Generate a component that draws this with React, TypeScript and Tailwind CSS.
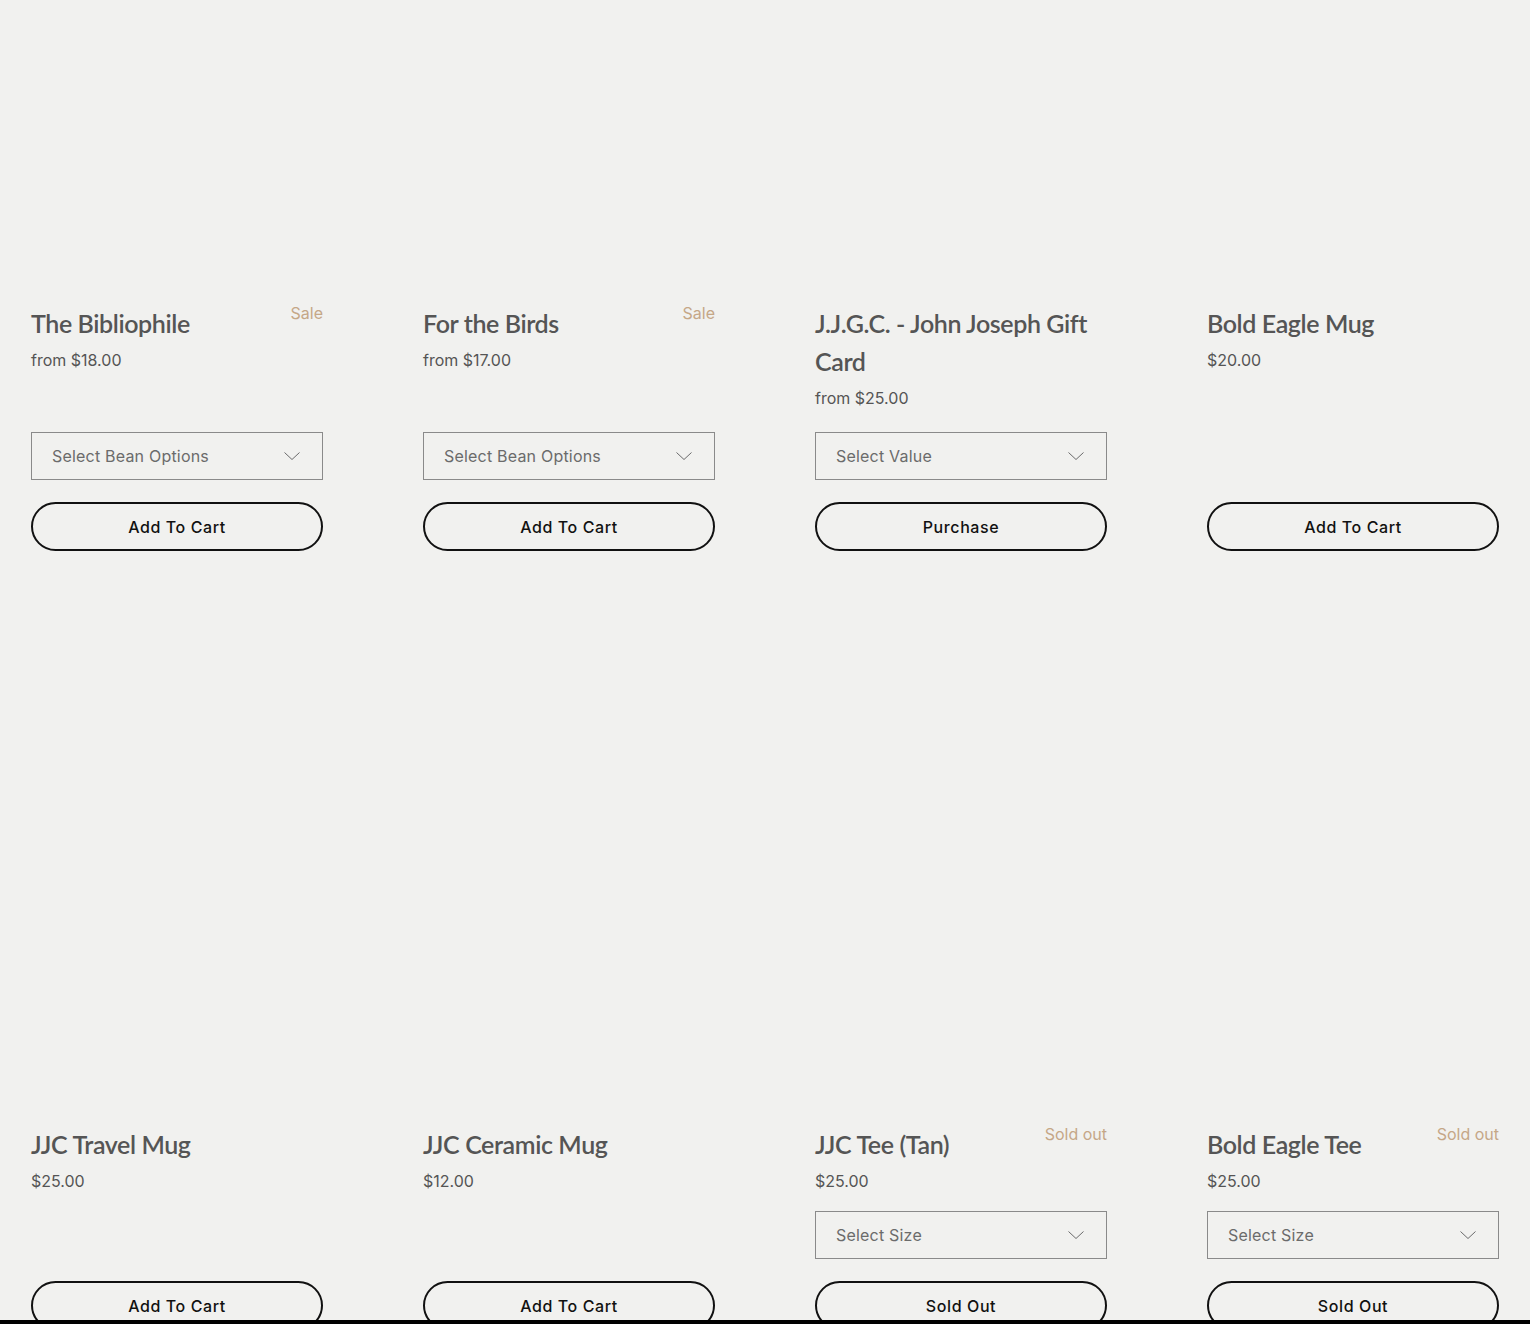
type Producto = {
  nombre: string;
  precio: string;
  etiqueta?: string;
  selector?: string;
  boton: string;
};

const PRODUCTOS: Producto[] = [
  { nombre: "The Bibliophile", precio: "from $18.00", etiqueta: "Sale", selector: "Select Bean Options", boton: "Add To Cart" },
  { nombre: "For the Birds", precio: "from $17.00", etiqueta: "Sale", selector: "Select Bean Options", boton: "Add To Cart" },
  { nombre: "J.J.G.C. - John Joseph Gift Card", precio: "from $25.00", selector: "Select Value", boton: "Purchase" },
  { nombre: "Bold Eagle Mug", precio: "$20.00", boton: "Add To Cart" },
  { nombre: "JJC Travel Mug", precio: "$25.00", boton: "Add To Cart" },
  { nombre: "JJC Ceramic Mug", precio: "$12.00", boton: "Add To Cart" },
  { nombre: "JJC Tee (Tan)", precio: "$25.00", etiqueta: "Sold out", selector: "Select Size", boton: "Sold Out" },
  { nombre: "Bold Eagle Tee", precio: "$25.00", etiqueta: "Sold out", selector: "Select Size", boton: "Sold Out" },
];

function Chevron() {
  return (
    <svg width="16" height="8" viewBox="0 0 16 8" fill="none" stroke="#6b6b6b" strokeWidth="1">
      <polyline points="0.5,0.5 8,7.5 15.5,0.5" />
    </svg>
  );
}

function Tarjeta({ p, primeraFila }: { p: Producto; primeraFila: boolean }) {
  return (
    <div className="flex flex-col">
      {/* imagen (vacía) */}
      <div className="h-[294px]" />

      <div className="mt-[10px] flex items-start justify-between gap-4">
        <h3 className="text-[25px] leading-[38px] font-semibold text-[#555] font-['Lato',sans-serif] tracking-[-0.4px]">
          {p.nombre}
        </h3>
        {p.etiqueta && (
          <span className="-mt-[3px] shrink-0 text-[16px] leading-6 text-[#c5a787] font-['Inter',sans-serif]">
            {p.etiqueta}
          </span>
        )}
      </div>
      <p className="mt-[6px] text-[16px] leading-6 text-[#555] font-['Inter',sans-serif]">{p.precio}</p>

      <div className={`mt-auto ${primeraFila ? "pt-[22px]" : "pt-[18px]"}`}>
        {p.selector ? (
          <div className="h-12 border border-[#8a8a8a] flex items-center justify-between pl-5 pr-[22px] text-[16px] text-[#6b6b6b] font-['Inter',sans-serif] tracking-[0.2px]">
            <span>{p.selector}</span>
            <Chevron />
          </div>
        ) : (
          <div className="h-12" />
        )}
        <button className="mt-[22px] w-full h-[49px] rounded-full border-2 border-[#111] text-[16px] font-medium text-[#111] font-['Inter',sans-serif] tracking-[0.6px]">
          {p.boton}
        </button>
      </div>
    </div>
  );
}

export default function App() {
  return (
    <div className="h-[1324px] flex flex-col bg-[#f1f1ef] overflow-hidden">
      <main className="flex-1 overflow-hidden px-[31px]">
        <section className="grid grid-cols-4 gap-x-[100px] gap-y-[270px]">
          {PRODUCTOS.map((p, i) => (
            <Tarjeta key={p.nombre} p={p} primeraFila={i < 4} />
          ))}
        </section>
      </main>
      <div className="h-1 bg-black shrink-0" />
    </div>
  );
}
